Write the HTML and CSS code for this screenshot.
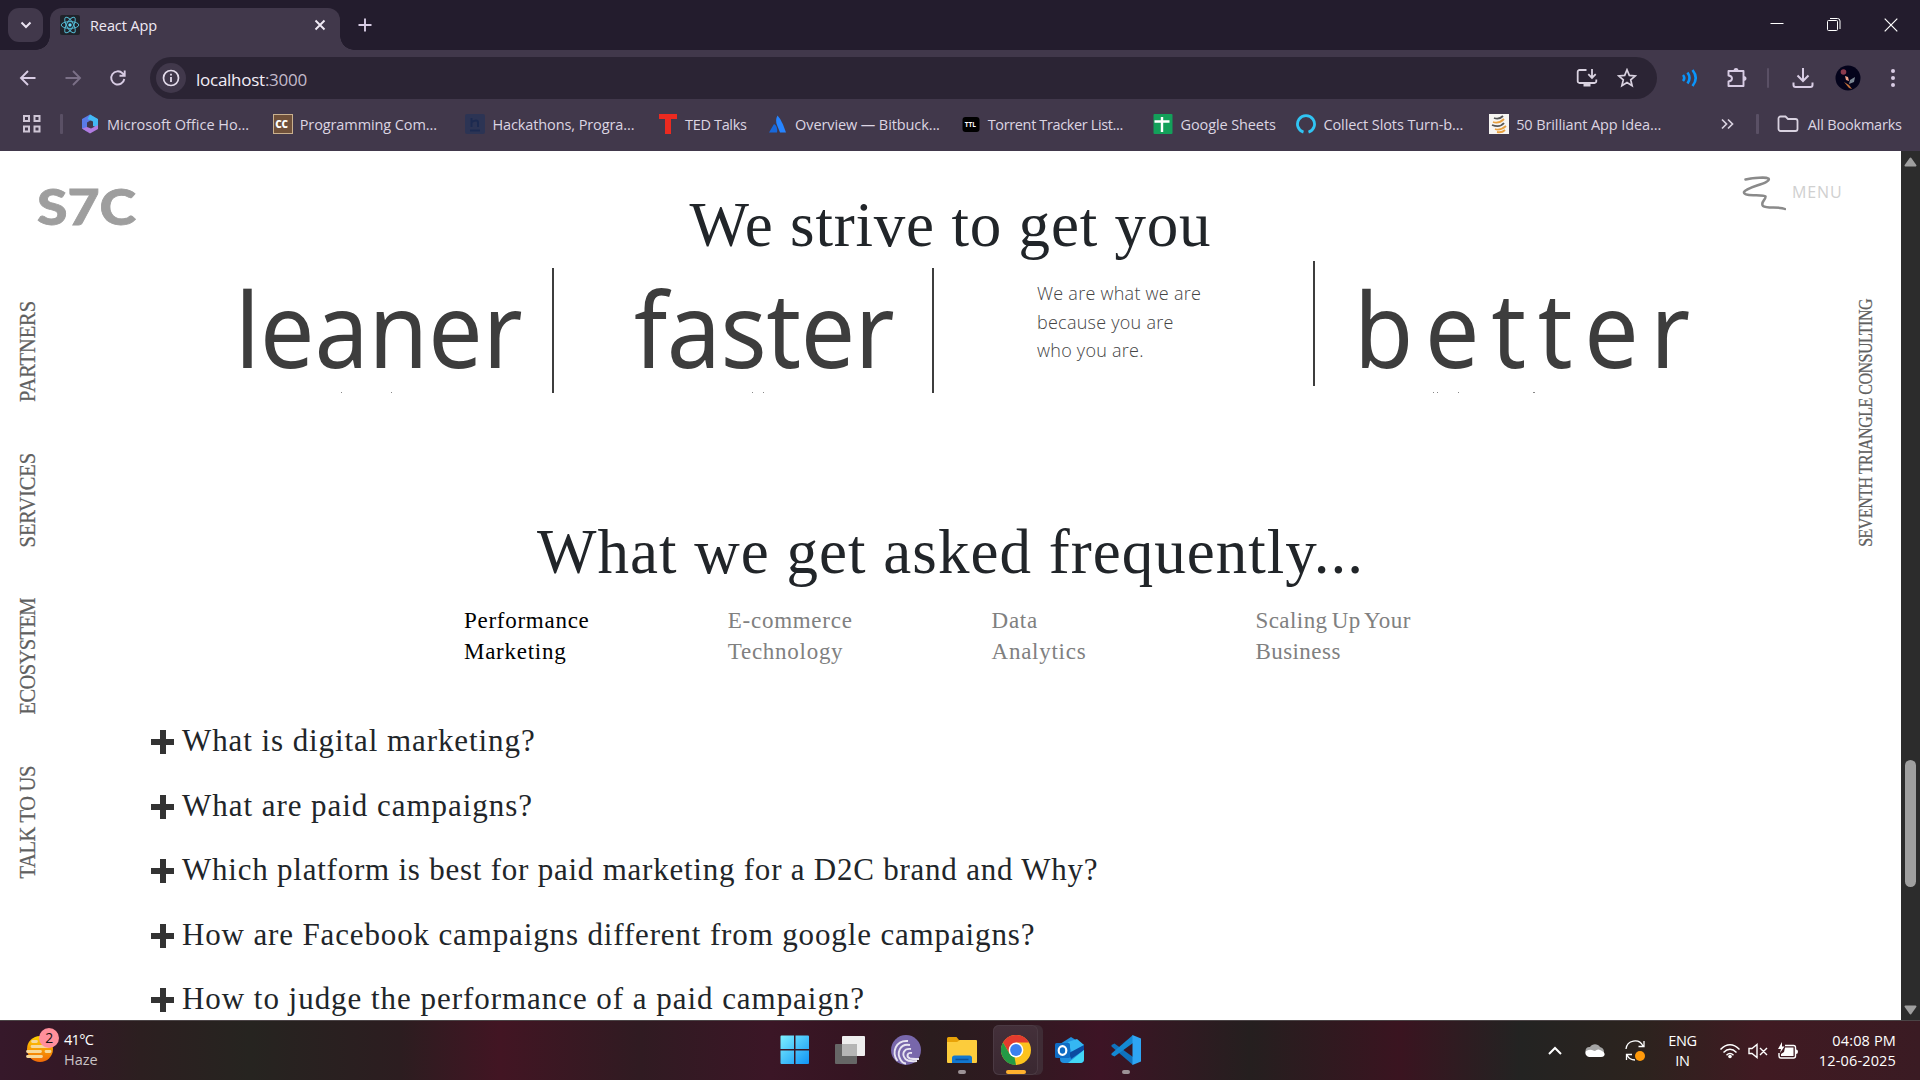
FILE: index.html
```html
<!DOCTYPE html>
<html lang="en">
<head>
<meta charset="utf-8">
<title>React App</title>
<link rel="stylesheet" href="styles.css">
</head>
<body>
<header class="browser">
  <div class="tabstrip">
    <div class="tab-search"><svg width="12" height="8" viewBox="0 0 12 8"><path d="M1.5 1.5 6 6l4.500-4.500" fill="none" stroke="#ebe4f2" stroke-width="2"/></svg></div>
    <div class="tab">
      <svg class="favicon" width="20" height="20" viewBox="0 0 20 20"><rect width="20" height="20" rx="2" fill="#20232a"/><g fill="none" stroke="#53b8d0" stroke-width="1"><ellipse cx="10" cy="10" rx="8.800" ry="3.400"/><ellipse cx="10" cy="10" rx="8.800" ry="3.400" transform="rotate(60 10 10)"/><ellipse cx="10" cy="10" rx="8.800" ry="3.400" transform="rotate(120 10 10)"/></g><circle cx="10" cy="10" r="1.700" fill="#61dafb"/></svg>
      <span class="tab-title">React App</span>
      <svg class="tab-close" width="12" height="12" viewBox="0 0 12 12"><path d="M1.500 1.500l9 9m0-9-9 9" stroke="#f0eaf5" stroke-width="1.900"/></svg>
    </div>
    <svg class="new-tab" width="14" height="14" viewBox="0 0 14 14"><path d="M7 .5v13M.5 7h13" stroke="#d8cce4" stroke-width="1.900"/></svg>
    <div class="window-controls">
      <svg width="14" height="14" viewBox="0 0 14 14"><path d="M.5 5.500h13" stroke="#fff"/></svg>
      <svg width="14" height="14" viewBox="0 0 14 14"><path d="M3 .5h7.500A2.500 2.500 0 0 1 13 3V11" fill="none" stroke="#fff"/><rect x=".5" y="2.500" width="10" height="10" rx="1" fill="none" stroke="#fff"/></svg>
      <svg width="14" height="14" viewBox="0 0 14 14"><path d="M.7.700l12.600 12.600M13.300.700.700 13.300" stroke="#fff" stroke-width="1.200"/></svg>
    </div>
  </div>
  <div class="toolbar">
    <svg class="nav" width="20" height="20" viewBox="0 0 20 20"><path d="M17.500 10H3.500M10 3l-7 7 7 7" fill="none" stroke="#d8cce4" stroke-width="1.900"/></svg>
    <svg class="nav" width="20" height="20" viewBox="0 0 20 20"><path d="M2.500 10h14M10 3l7 7-7 7" fill="none" stroke="#7b7087" stroke-width="1.900"/></svg>
    <svg class="nav" width="20" height="20" viewBox="0 0 20 20"><path d="M16.300 11a6.600 6.600 0 1 1-1.700-5.600l1.700 1.800M16.700 2.500v5.200h-5.200" fill="none" stroke="#d8cce4" stroke-width="1.900"/></svg>
    <div class="omnibox">
      <span class="site-info"><svg width="18" height="18" viewBox="0 0 18 18"><circle cx="9" cy="9" r="7.500" fill="none" stroke="#e3dbea" stroke-width="1.700"/><path d="M9 8v5M9 4.800v1.800" stroke="#e3dbea" stroke-width="1.800"/></svg></span>
      <span class="url">localhost<span>:3000</span></span>
      <svg class="install" width="22" height="20" viewBox="0 0 22 20"><path d="M10.500 2H3.500A1.800 1.800 0 0 0 1.700 3.800v9.400a1.800 1.800 0 0 0 1.800 1.800h15a1.800 1.800 0 0 0 1.800-1.800V11.500M16 1v8.500M12.300 6.200 16 9.900l3.700-3.700" fill="none" stroke="#d9d2e0" stroke-width="1.800"/><path d="M7.500 15h7v3.500h-7z" fill="#d9d2e0"/></svg>
      <svg width="20" height="20" viewBox="0 0 20 20"><path d="M10 1.800l2.300 5.600 6 .5-4.600 3.900 1.400 5.900L10 14.500l-5.100 3.200 1.400-5.900L1.700 7.900l6-.5z" fill="none" stroke="#d9d2e0" stroke-width="1.700"/></svg>
    </div>
    <svg class="ext" width="18" height="18" viewBox="0 0 18 18"><path d="M2 6q2.500 3 0 6M6.500 3.500q4 5.500 0 11M11.500 1q6.500 8 0 16" fill="none" stroke="#0a95fb" stroke-width="2.600"/></svg>
    <svg class="puzzle" width="22" height="22" viewBox="0 0 22 22"><path d="M2.500 4h15v15h-15v-4.500q3.500-.5 3.500-3t-3.500-3z" fill="none" stroke="#d8cce4" stroke-width="1.900" stroke-linejoin="round"/><path d="M7.500 4a2.500 3 0 0 1 5 0zM17.500 9a3 2.500 0 0 1 0 5z" fill="#d8cce4"/></svg>
    <i class="sep"></i>
    <svg class="download" width="22" height="22" viewBox="0 0 22 22"><path d="M11 1v13M5.500 8.500 11 14l5.500-5.500M1.500 15.500V18A2 2 0 0 0 3.500 20h15a2 2 0 0 0 2-2v-2.500" fill="none" stroke="#d8cce4" stroke-width="2"/></svg>
    <svg class="avatar" width="26" height="26" viewBox="0 0 26 26"><circle cx="13" cy="13" r="12.500" fill="#04031b"/><circle cx="8.500" cy="7" r="2.800" fill="#8c3a4d"/><path d="M10 11l3 1 1 4-3-1z" fill="#f1a38b"/><path d="M9 17l5 3 3 4-3-1z" fill="#c4713b"/><path d="M15 15l5-3-1 5-5 2z" fill="#7b8794"/></svg>
    <svg class="dots" width="6" height="20" viewBox="0 0 6 20"><g fill="#d8cce4"><circle cx="3" cy="3" r="2"/><circle cx="3" cy="10" r="2"/><circle cx="3" cy="17" r="2"/></g></svg>
  </div>
  <nav class="bookmarks">
    <svg class="apps" width="20" height="20" viewBox="0 0 20 20"><path d="M2 2h5v5H2zM12.500 2h5v5h-5zM2 12.500h5v5H2zM12.500 12.500h5v5h-5z" fill="none" stroke="#cfc6d6" stroke-width="2"/></svg>
    <i class="sep"></i>
    <a class="bm bm-ms"><svg width="20" height="20" viewBox="0 0 20 20"><path d="M10 .5 2 5v9.500l5 3V8.500l5-3 5 2V5z" fill="#5a7be8"/><path d="M10 .5 18 5v9l-5-2V7.500L7.500 5z" fill="#42b9f5"/><path d="M18 11v4l-8 4.500-8-5 5-1.500 4 1.500z" fill="#b07be0"/></svg><span>Microsoft Office Ho...</span></a>
    <a class="bm"><svg width="20" height="20" viewBox="0 0 20 20"><rect x=".5" y=".5" width="19" height="19" fill="#70513a" stroke="#c9b08e"/><text x="2.200" y="14" class="cc">CC</text></svg><span>Programming Com...</span></a>
    <a class="bm"><svg width="20" height="20" viewBox="0 0 20 20"><rect width="20" height="20" rx="2" fill="#2c3454"/><path d="M6.500 4v9M6.500 8q6-3 6.500 0v5M5 16.500h10" fill="none" stroke="#1c2a50" stroke-width="2"/></svg><span>Hackathons, Progra...</span></a>
    <a class="bm bm-short"><svg width="20" height="20" viewBox="0 0 20 20"><path d="M1 0h18v5h-6v15H7V5H1z" fill="#eb2a20"/></svg><span>TED Talks</span></a>
    <a class="bm"><svg width="20" height="20" viewBox="0 0 20 20"><path d="M9.500 1.500q3 3 5.500 9l3 8h-6L9 11Q7 6 9.500 1.500z" fill="#2684ff"/><path d="M6 10q4 2 3 8.500H1z" fill="#1868db"/></svg><span>Overview — Bitbuck...</span></a>
    <a class="bm bm-ttl"><svg width="20" height="20" viewBox="0 0 20 20"><rect x="1.500" y="3" width="17" height="15" rx="3" fill="#000"/><text x="3.800" y="13" class="ttl">TTL</text></svg><span>Torrent Tracker List...</span></a>
    <a class="bm bm-sheets"><svg width="20" height="20" viewBox="0 0 20 20"><rect x=".5" width="19" height="20" rx="1" fill="#13a05a"/><path d="M9 3v15M1.500 7.500h15" stroke="#fff" stroke-width="2.400"/></svg><span>Google Sheets</span></a>
    <a class="bm"><svg width="20" height="20" viewBox="0 0 20 20"><path d="M7.500 18.200a8.500 8.500 0 1 1 5 0" fill="none" stroke="#31c4f3" stroke-width="2.800"/></svg><span>Collect Slots Turn-b...</span></a>
    <a class="bm"><svg width="20" height="20" viewBox="0 0 20 20"><rect width="20" height="20" fill="#f7f5f2"/><g fill="none" stroke-width="1.800"><path d="M5 4q5 2 9-2M3 11q8 3 12-2" stroke="#555"/><path d="M4 8q6 2 11-3M6 15q5 2 11-3M8 18q5 1 8-2" stroke="#e8a040"/></g></svg><span>50 Brilliant App Idea...</span></a>
    <svg class="more" width="14" height="12" viewBox="0 0 14 12"><path d="M2 1.500 6.500 6 2 10.500M8 1.500 12.500 6 8 10.500" fill="none" stroke="#d9d2e0" stroke-width="1.700"/></svg>
    <i class="sep"></i>
    <svg class="folder" width="22" height="18" viewBox="0 0 22 18"><path d="M1.500 3.500a2 2 0 0 1 2-2h5l2.500 2.500h7.500a2 2 0 0 1 2 2v8a2 2 0 0 1-2 2h-15a2 2 0 0 1-2-2z" fill="none" stroke="#d9d2e0" stroke-width="1.800"/></svg>
    <span class="all">All Bookmarks</span>
  </nav>
</header>

<div class="viewport">
  <div class="page">
    <aside class="rail">
      <div class="logo">S7C</div>
      <ul class="side-links">
        <li>PARTNERS</li>
        <li>SERVICES</li>
        <li>ECOSYSTEM</li>
        <li>TALK TO US</li>
      </ul>
    </aside>
    <main class="content">
      <h1 class="title strive">We strive to get you</h1>
      <section class="words">
        <div class="word leaner"><b>leaner</b><svg class="specks" width="200" height="1"><path d="M45 .5h1M95 .5h1" stroke="#888"/></svg></div>
        <div class="word faster"><b>faster</b><svg class="specks" width="200" height="1"><path d="M118 .5h1M129 .5h1" stroke="#888"/></svg></div>
        <div class="word about"><p>We are what we are<br>because you are<br>who you are.</p></div>
        <div class="word better"><b>better</b><svg class="specks" width="200" height="1"><path d="M79 .5h1M83 .5h1M104 .5h1M179 .5h2" stroke="#888"/></svg></div>
      </section>
      <h2 class="title asked">What we get asked frequently...</h2>
      <div class="topics">
        <span class="topic active">Performance<br>Marketing</span>
        <span class="topic">E-commerce<br>Technology</span>
        <span class="topic">Data<br>Analytics</span>
        <span class="topic scaling">Scaling Up Your<br>Business</span>
      </div>
      <ul class="faq">
        <li><i class="plus"></i>What is digital marketing?</li>
        <li><i class="plus"></i>What are paid campaigns?</li>
        <li><i class="plus"></i>Which platform is best for paid marketing for a D2C brand and Why?</li>
        <li><i class="plus"></i>How are Facebook campaigns different from google campaigns?</li>
        <li><i class="plus"></i>How to judge the performance of a paid campaign?</li>
      </ul>
    </main>
    <aside class="right">
      <div class="menu">
        <svg width="44" height="36" viewBox="0 0 44 36"><path d="M3.500 4.500C12 3 24 2 26.500 3.500 30 8 4 12 2 17c-1 5 19 2 21.500 4.500C24 25 18 27 21 31c4 3 16 0 22 3" fill="none" stroke="#8a8a8a" stroke-width="2.500" stroke-linecap="round"/></svg>
        <span>MENU</span>
      </div>
      <div class="company">SEVENTH TRIANGLE CONSULTING</div>
    </aside>
  </div>
  <div class="scrollbar">
    <svg width="13" height="10" viewBox="0 0 13 10"><path d="M6.500 1.500 11.500 8.500h-10z" fill="#9f9f9f" stroke="#9f9f9f" stroke-width="2" stroke-linejoin="round"/></svg>
    <i class="thumb"></i>
    <svg width="13" height="10" viewBox="0 0 13 10"><path d="M6.500 8.500 11.500 1.500h-10z" fill="#9f9f9f" stroke="#9f9f9f" stroke-width="2" stroke-linejoin="round"/></svg>
  </div>
</div>

<footer class="taskbar">
  <div class="weather">
    <svg width="36" height="38" viewBox="0 0 36 38"><defs><linearGradient id="sun" x1="0" y1="0" x2="0" y2="1"><stop offset="0" stop-color="#ffd000"/><stop offset="1" stop-color="#f06a08"/></linearGradient></defs><circle cx="15" cy="23" r="13" fill="url(#sun)"/><path d="M7.500 15.500h4M7 20.500h16M2.500 25.500h13M21 25.500h4M2.500 30.500h14" stroke="#f7d99a" stroke-width="2.800" stroke-linecap="round"/><circle cx="24" cy="12" r="10" fill="#ff8f9b"/><text x="20.200" y="17" class="badge">2</text></svg>
    <div><b>41°C</b><span>Haze</span></div>
  </div>
  <div class="apps-row">
    <div class="app"><svg width="30" height="30" viewBox="0 0 30 30"><defs><linearGradient id="win" x1="0" y1="0" x2="1" y2="1"><stop offset="0" stop-color="#7df0ff"/><stop offset="1" stop-color="#1094f5"/></linearGradient></defs><path d="M.5 1.500q0-1 1-1H14V14H.5zM15.500.5H28q1 0 1 1V14H15.500zM.5 15.500H14V29H1.500q-1 0-1-1zM15.500 15.500H29V28q0 1-1 1H15.500z" fill="url(#win)"/></svg></div>
    <div class="app"><svg width="32" height="30" viewBox="0 0 32 30"><rect x="1" y="9" width="22" height="20" rx="1" fill="#666"/><rect x="8" y="1" width="23" height="20" rx="1" fill="#eee"/><path d="M8 9h15v12H8z" fill="#b5b5b5"/></svg></div>
    <div class="app"><svg width="30" height="30" viewBox="0 0 30 30"><circle cx="15" cy="15" r="15" fill="#7867ab"/><g fill="none" stroke="#e8e5f2" stroke-width="1.900"><path d="M17 6C5 5 0 17 6.500 26M19 10C9 8 5 18 10 25.500q2 3 5 3M20 14c-7-1-10 5-5.500 10q3 3 11.500 2M21 18c-5-1-6 4-2 5.500q2 .5 9 .5"/></g></svg></div>
    <div class="app"><svg width="32" height="30" viewBox="0 0 32 30"><path d="M1 3.500a1.500 1.500 0 0 1 1.500-1.500h8l2.500 3h17v8H1z" fill="#e8a208"/><path d="M1 7h10l3-2h16a1 1 0 0 1 1 1v21a1 1 0 0 1-1 1H2a1 1 0 0 1-1-1z" fill="#fccc3c"/><path d="M6 28v-5a2.500 2.500 0 0 1 2.500-2.500h15A2.500 2.500 0 0 1 26 23v5z" fill="#1277cf"/><path d="M9.500 24.500h13" stroke="#0a4f97" stroke-width="1.500"/></svg><i></i></div>
    <div class="app active"><svg width="30" height="30" viewBox="0 0 30 30"><circle cx="15" cy="15" r="15" fill="#fcc31e"/><path d="M2 7.500A15 15 0 0 1 28 7.500H15l-6.500 11z" fill="#e33b2e"/><path d="M2 7.500 8.500 18.700l6.500 3.800L15 30A15 15 0 0 1 2 7.500z" fill="#249a46"/><path d="M15 30l6.500-11.500-8 3.500z" fill="#fcc31e"/><circle cx="15" cy="15" r="7.400" fill="#fff"/><circle cx="15" cy="15" r="5.900" fill="#3a80ee"/></svg><i></i></div>
    <div class="app"><svg width="32" height="30" viewBox="0 0 32 30"><path d="M6 9 17 2l13 8v14q0 4-4 4H10q-4 0-4-4z" fill="#1f8fdf"/><path d="M14 7l9-3 7 6-12 8z" fill="#35b7f2"/><path d="M15 18 30 10v5l-13 9z" fill="#0b4aa0"/><path d="M14 28 30 15v9q0 4-4 4z" fill="#43d6f5"/><rect x="1" y="8" width="15" height="15" rx="1.500" fill="#0f6cc4"/><ellipse cx="8.500" cy="15.500" rx="3.800" ry="4.300" fill="none" stroke="#fff" stroke-width="2.200"/></svg></div>
    <div class="app"><svg width="30" height="30" viewBox="0 0 30 30"><path d="M22 22 3.500 8.500.5 10v1.500L22 30z" fill="#0f72bd"/><path d="M22 8 3.500 21.500.5 20v-1.500L22 0z" fill="#1489d4"/><path d="M21.500 0 30 3.500v23L21.500 30z" fill="#2ea5f3"/></svg><i></i></div>
  </div>
  <div class="tray">
    <svg width="16" height="10" viewBox="0 0 16 10"><path d="M2 8l6-6 6 6" fill="none" stroke="#fff" stroke-width="2"/></svg>
    <svg class="cloud" width="22" height="15" viewBox="0 0 22 15"><path d="M5 12a4 4 0 0 1 1-8 6 6 0 0 1 10 0q4 1 4 5v3z" fill="#a5a5a5"/><path d="M5 14a4 4 0 0 1-3-6q4-2 6-1 2 1 3 1 3-3 7 0 4 2 2 5-1 1-3 1z" fill="#fff"/></svg>
    <svg class="sync" width="22" height="22" viewBox="0 0 22 22"><path d="M2 9A9 9 0 0 1 19 6M20 1v5.500h-5.500M2.500 20v-5.500H8M3 15a9 9 0 0 0 8 5" fill="none" stroke="#fff" stroke-width="1.300"/><circle cx="16" cy="16" r="5" fill="#ff9a0b"/></svg>
    <div class="lang"><span>ENG</span><span>IN</span></div>
    <svg class="wifi" width="22" height="16" viewBox="0 0 22 16"><g fill="none" stroke="#fff" stroke-width="1.500"><path d="M1.500 6.500q9.500-9.500 19 0M4.500 9.500q6.500-6.500 13 0M7.500 12.300q3.500-3.500 7 0"/></g><circle cx="11" cy="13.500" r="1.800" fill="#fff"/></svg>
    <svg class="mute" width="20" height="16" viewBox="0 0 20 16"><path d="M1 5.500v5h3l5 4v-13l-5 4zM12 5l7 7M19 5l-7 7" fill="none" stroke="#fff" stroke-width="1.400"/></svg>
    <svg class="battery" width="22" height="18" viewBox="0 0 22 18"><path d="M8 3.500h8.500a2 2 0 0 1 2 2V14a2 2 0 0 1-2 2H4a2 2 0 0 1-2-2v-3" fill="none" stroke="#fff" stroke-width="1.400"/><path d="M8 5.500h8.500V14H4v-2l3-2zM19 7.500q2 0 2 2.200T19 12zM5 0 1 7h3L3 11l4.500-6.500H5z" fill="#fff"/></svg>
    <div class="clock"><span>04:08 PM</span><span>12-06-2025</span></div>
  </div>
</footer>
</body>
</html>
```
FILE: styles.css
```css
* { box-sizing: border-box; }
body { margin: 0; width: 1920px; height: 1080px; overflow: hidden; background: #fff; font-family: "Open Sans", "Noto Sans", sans-serif; display: flex; flex-direction: column; }
ul { list-style: none; margin: 0; padding: 0; }
svg { display: block; flex: none; }

/* browser chrome */
.browser { height: 151px; flex: none; background: #41384b; color: #dcd5e2; }
.tabstrip { height: 50px; background: #231c2d; display: flex; align-items: flex-start; padding: 8px 22px 0 8px; }
.tab-search { width: 35px; height: 34px; border-radius: 11px; background: #41384b; display: flex; align-items: center; justify-content: center; margin-right: 7px; }
.tab { width: 290px; height: 42px; background: #41384b; border-radius: 12px 12px 0 0; display: flex; align-items: center; padding: 0 14px 8px 10px; position: relative; }
.tab::before, .tab::after { content: ""; position: absolute; bottom: 0; width: 14px; height: 14px; }
.tab::before { left: -14px; background: radial-gradient(circle at 0 0, transparent 13.500px, #41384b 14px); }
.tab::after { right: -14px; background: radial-gradient(circle at 100% 0, transparent 13.500px, #41384b 14px); }
.tab-title { font-size: 14.500px; letter-spacing: -0.1px; color: #efe9f4; margin-left: 10px; flex: 1; white-space: nowrap; }
.new-tab { margin: 10px 0 0 18px; }
.window-controls { margin: 10px 0 0 auto; display: flex; gap: 43px; }

.toolbar { height: 50px; margin-top: 7px; display: flex; align-items: center; padding: 0 0 8px 18px; }
.nav { margin-right: 25px; }
.omnibox { width: 1507px; height: 42px; margin-left: -3px; border-radius: 21px; background: #2b2434; display: flex; align-items: center; padding: 0 20px 0 6px; }
.site-info { width: 30px; height: 30px; border-radius: 50%; background: #41384b; display: flex; align-items: center; justify-content: center; margin-right: 10px; }
.url { font-size: 17px; letter-spacing: -0.260px; padding-top: 2px; color: #f3eef7; flex: 1; }
.url span { color: #c3bacb; }
.install { margin-right: 19px; }
.ext { margin-left: 24px; }
.puzzle { margin-left: 27px; }
.sep { display: block; flex: none; width: 3px; height: 20px; border-radius: 1px; background: #5a5065; }
.toolbar .sep { margin-left: 19px; width: 2px; }
.download { margin-left: 23px; }
.avatar { margin-left: 21px; }
.dots { margin-left: 29px; }

.bookmarks { height: 48px; display: flex; align-items: center; padding: 0 0 14px 22px; font-size: 14.500px; letter-spacing: -0.100px; white-space: nowrap; }
.bookmarks > .sep { margin: 0 17px 0 18px; }
.bm { width: 192.700px; flex: none; display: flex; align-items: center; gap: 7px; }
.bm-ms span { letter-spacing: 0; }
.bm-short { width: 110px; }
.bm-short span { letter-spacing: -0.350px; }
.bm-ttl span { letter-spacing: -0.37px; }
.bm-sheets { width: 143px; }
.more { margin-left: 38px; }
.bookmarks > .more + .sep { margin: 0 18px 0 22px; }
.all { margin-left: 9px; letter-spacing: -0.2px; }
.cc { font: 800 10px "Open Sans", sans-serif; fill: #fff; }
.ttl { font: 700 6.500px "Open Sans", sans-serif; fill: #fff; }

/* site */
.viewport { height: 869px; flex: none; display: flex; }
.page { flex: 1; height: 869px; overflow: hidden; display: grid; grid-template-columns: 151px 1fr 151px; background: #fff; }
.logo { height: 150px; width: 130px; padding: 25px 0 0 37px; font: 900 49px/60px Lato, sans-serif; color: #9e9e9e; -webkit-text-stroke: 0.800px #9e9e9e; white-space: nowrap; transform: scaleX(1.130); transform-origin: 37px 0; }
.side-links { display: flex; flex-direction: column; gap: 51px; padding-left: 14px; }
.side-links li, .company { writing-mode: vertical-rl; font-family: "Liberation Serif", serif; color: #606060; -webkit-text-stroke: 0.200px #606060; white-space: nowrap; }
.side-links li { font-size: 20.500px; line-height: 26px; width: 26px; transform: rotate(180deg) scaleX(1.140); letter-spacing: -0.100px; }
.side-links li:nth-child(3) { letter-spacing: -0.600px; }
.side-links li:nth-child(4) { letter-spacing: -0.350px; }
.content { display: flex; flex-direction: column; }
.title { margin: 0; font: 400 63px/74px "Liberation Serif", serif; color: #212529; text-align: center; white-space: nowrap; letter-spacing: 0.800px; }
.strive { padding-top: 37px; height: 110px; }
.words { display: grid; grid-template-columns: repeat(3, 380.500px) 1fr; margin-left: 22px; height: 132px; padding-top: 7px; }
.word { height: 125px; border-right: 2px solid #3d3d3d; display: flex; flex-direction: column; justify-content: space-between; }
.word b { display: block; font: 400 103.500px/120px "Noto Sans", sans-serif; height: 120px; color: #3d3d3d; white-space: nowrap; transform: scaleX(0.933); transform-origin: 0 0; }
.leaner { padding-left: 62px; }
.faster { padding-left: 80px; }
.faster b { letter-spacing: -0.500px; }
.better { border: 0; padding-left: 39px; }
.better b { letter-spacing: 12.500px; }
.about { margin-top: -7px; padding-left: 103px; }
.about p { margin: 18px 0 0; font: 300 18px/28.500px "Open Sans", sans-serif; letter-spacing: 0.250px; color: #444; white-space: nowrap; }
.specks { margin-left: 61px; }
.faster .specks, .better .specks { margin-left: 0; }
.asked { margin-top: 121px; height: 76px; padding-top: 1px; letter-spacing: 1.020px; }
.topics { display: grid; grid-template-columns: repeat(4, 263.800px); margin: 15px 0 0 313px; font: 400 23px/31px "Liberation Serif", serif; letter-spacing: 0.730px; color: #808080; white-space: nowrap; }
.topic.active { color: #000; }
.topic.scaling { letter-spacing: 0.450px; word-spacing: -2px; }
.faq { margin-top: 42px; font: 400 31px/64px "Liberation Serif", serif; letter-spacing: 0.960px; color: #212529; }
.faq li { height: 64.500px; display: flex; align-items: center; white-space: nowrap; }
.faq li:nth-child(1) { letter-spacing: 0.920px; }
.faq li:nth-child(3) { letter-spacing: 0.770px; }
.faq li:nth-child(4) { letter-spacing: 0.860px; }
.plus { width: 23px; height: 24px; margin: 2px 8px 0 0; flex: none; background: linear-gradient(#333, #333) center / 6px 24px no-repeat, linear-gradient(#333, #333) center / 23px 6px no-repeat; }
.right { display: flex; flex-direction: column; }
.menu { height: 148px; padding: 24px 0 0; margin-left: -8px; display: flex; align-items: flex-start; font-size: 16px; letter-spacing: 0.900px; color: #d0d0d0; }
.menu span { margin: 6px 0 0 6px; }
.company { margin-left: 105px; font-size: 16px; line-height: 22px; width: 22px; letter-spacing: -0.500px; transform: rotate(180deg) scaleX(1.200); }

.scrollbar { width: 19px; background: #2c2c2c; display: flex; flex-direction: column; align-items: center; padding: 6px 0 5px; }
.thumb { width: 11px; height: 127px; border-radius: 6px; background: #9f9f9f; margin: 593px 0 auto; }

/* taskbar */
.taskbar { height: 60px; flex: none; border-top: 1px solid #4b4446; background: linear-gradient(90deg, #36182a 0, #341826 60px, #2c1f20 140px, #262420 250px, #2c1d20 400px, #421523 500px, #301b22 640px, #3b1626 770px, #351522 850px, #2a1c1e 930px, #2e1a20 1000px, #3d1425 1100px, #251f1f 1250px, #3a1420 1400px, #232322 1520px, #2c231e 1640px, #401a22 1760px, #3a1b23 1920px); display: flex; color: #fff; font-size: 14.500px; line-height: 20px; }
.weather { width: 780px; padding: 5px 0 0 25px; display: flex; }
.weather div { margin: 4px 0 0 3px; display: flex; flex-direction: column; }
.weather b { font-weight: 400; letter-spacing: -0.700px; }
.weather span { color: #c9c3c5; }
.badge { font: 14px "Open Sans", sans-serif; fill: #111; }
.apps-row { display: flex; margin-left: -13px; padding-top: 4px; }
.app { width: 55.600px; height: 50px; display: flex; flex-direction: column; align-items: center; padding-top: 10px; }
.app i { width: 8px; height: 4px; border-radius: 2px; background: #9c9296; margin-top: 5px; }
.app.active { width: 45px; margin: 0 4px 0 4px; background: linear-gradient(#44303a, #3a2831); border-radius: 6px; box-shadow: inset 0 0 0 1px #4b3a43, 5px 0 0 #3f2c35; }
.app.active i { width: 20px; background: #ffb02e; }
.tray { margin-left: auto; padding-right: 24px; display: flex; align-items: center; }
.cloud { margin-left: 21px; }
.sync { margin-left: 18px; }
.lang { margin-left: 22px; letter-spacing: -0.300px; display: flex; flex-direction: column; align-items: center; }
.wifi { margin-left: 22px; }
.mute { margin-left: 7px; }
.battery { margin-left: 9px; }
.clock { margin-left: 20px; letter-spacing: 0.150px; display: flex; flex-direction: column; align-items: flex-end; }
```
